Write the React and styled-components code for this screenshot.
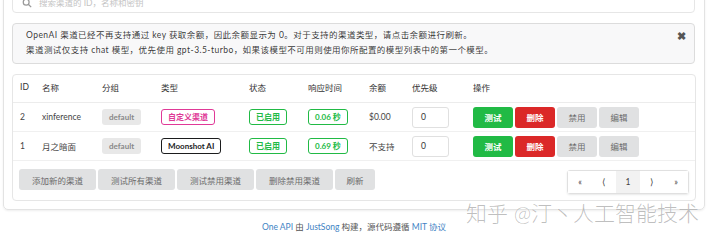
import React from 'react';
import styled, { createGlobalStyle } from 'styled-components';

const GlobalStyle = createGlobalStyle`
    * {
        box-sizing: border-box;
    }
    body {
        margin: 0;
        background: #fff;
        overflow: hidden;
        font-family: Lato, "Noto Sans CJK SC", sans-serif;
        color: rgba(0, 0, 0, 0.87);
    }
`;

const Page = styled.div`
    width: 705px;
    padding: 1px 0 0 3px;
    position: relative;
`;

const Card = styled.div`
    margin-top: -23px;
    padding: 9px 9px 8px 8px;
    border: 1px solid #e3e3e3;
    border-radius: 5px;
    box-shadow: 0 1px 2px rgba(34, 36, 38, 0.08);
`;

const Search = styled.div`
    height: 25px;
    border: 1px solid #e6e6e6;
    border-radius: 4px;
    display: flex;
    align-items: flex-end;
    gap: 7px;
    padding: 0 0 4px 9px;
    color: #c4c4c4;
    font-size: 8.5px;
`;

const Message = styled.div`
    margin-top: 10px;
    height: 41px;
    padding: 4px 13px;
    background: #f8f8f9;
    border: 1px solid #dcdcdc;
    border-radius: 4px;
    font-size: 8.5px;
    letter-spacing: 0.45px;
    line-height: 15px;
    color: rgba(0, 0, 0, 0.8);
    position: relative;
`;

const Close = styled.span`
    position: absolute;
    right: 8px;
    top: 4px;
    font-size: 11px;
    font-weight: 700;
    color: #555;
`;

const Table = styled.table`
    margin-top: 10px;
    width: 100%;
    table-layout: fixed;
    border-collapse: separate;
    border-spacing: 0;
    border: 1px solid #e6e6e6;
    border-radius: 4px;
    font-size: 8.5px;
`;

const Th = styled.th`
    height: 28px;
    padding: 0 0 3px 7px;
    text-align: left;
    font-weight: 400;
    color: #333;
    border-bottom: 1px solid #ececec;
`;

const Td = styled.td`
    height: 29px;
    padding: 0 0 0 7px;
    color: #444;
    border-bottom: 1px solid #f0f0f0;
    white-space: nowrap;
`;

const FootCell = styled.td`
    height: 38px;
    padding: 7px 6px 6px 6px;
    vertical-align: top;
`;

const FootRow = styled.div`
    display: flex;
    justify-content: space-between;
    align-items: flex-start;
`;

const Label = styled.span`
    display: inline-block;
    height: 16px;
    line-height: 14px;
    padding: 0 6px;
    border-radius: 3px;
    font-size: 8px;
    font-weight: 700;
    border: 1px solid ${p => p.$color || 'transparent'};
    color: ${p => p.$color || '#888'};
    background: ${p => (p.$color ? '#fff' : '#e8e8e8')};
`;

const Priority = styled.div`
    width: 37px;
    height: 21px;
    line-height: 19px;
    padding-left: 8px;
    border: 1px solid #e0e0e0;
    border-radius: 3px;
    color: #333;
`;

const Actions = styled.div`
    display: flex;
    gap: 2px;
`;

const Btn = styled.button`
    height: 21px;
    min-width: 40px;
    padding: 0 ${p => p.$pad || 0}px;
    border: none;
    border-radius: 3px;
    font-family: inherit;
    font-size: 8.5px;
    font-weight: ${p => (p.$bg ? 700 : 400)};
    background: ${p => p.$bg || '#e0e1e2'};
    color: ${p => (p.$bg ? '#fff' : '#6b6b6b')};
`;

const Toolbar = styled.div`
    display: flex;
    gap: 2px;
    margin-top: 1px;
`;

const Pager = styled.div`
    margin-top: 2px;
    display: flex;
    border: 1px solid #e0e0e0;
    border-radius: 3px;
    box-shadow: 0 1px 2px rgba(34, 36, 38, 0.1);
`;

const PageItem = styled.div`
    width: 24px;
    height: 22px;
    display: flex;
    align-items: center;
    justify-content: center;
    font-size: 8.5px;
    color: #444;
    background: ${p => (p.$active ? '#f2f2f2' : '#fff')};
`;

const Footer = styled.div`
    text-align: center;
    font-size: 8.5px;
    color: #555;
    padding-top: 10px;
`;

const A = styled.span`
    color: #4183c4;
`;

const Watermark = styled.div`
    position: absolute;
    left: 466px;
    top: 197px;
    font-size: 21px;
    font-weight: 300;
    color: rgba(0, 0, 0, 0.26);
    text-shadow: 0 0 1px #fff;
    white-space: nowrap;
`;

const SearchIcon = () => (
    <svg width="10" height="10" viewBox="0 0 24 24" fill="none" stroke="#999" strokeWidth="3">
        <circle cx="10" cy="10" r="7" />
        <line x1="15" y1="15" x2="22" y2="22" />
    </svg>
);

const cols = [22, 60, 59, 88, 59, 61, 43, 61, 229];
const green = '#21ba45';

const rows = [
    { id: 2, name: 'xinference', type: '自定义渠道', typeColor: '#e03997', time: '0.06 秒', balance: '$0.00' },
    { id: 1, name: '月之暗面', type: 'Moonshot AI', typeColor: '#1b1c1d', time: '0.69 秒', balance: '不支持' },
];

export default function App() {
    return (
        <Page>
            <GlobalStyle />
            <Card>
                <Search>
                    <SearchIcon />
                    <span>搜索渠道的 ID，名称和密钥</span>
                </Search>
                <Message>
                    <Close>✖</Close>
                    OpenAI 渠道已经不再支持通过 key 获取余额，因此余额显示为 0。对于支持的渠道类型，请点击余额进行刷新。
                    <br />
                    渠道测试仅支持 chat 模型，优先使用 gpt-3.5-turbo，如果该模型不可用则使用你所配置的模型列表中的第一个模型。
                </Message>
                <Table>
                    <colgroup>
                        {cols.map((w, i) => <col key={i} style={{ width: w }} />)}
                    </colgroup>
                    <thead>
                        <tr>
                            {['ID', '名称', '分组', '类型', '状态', '响应时间', '余额', '优先级', '操作'].map(h => (
                                <Th key={h}>{h}</Th>
                            ))}
                        </tr>
                    </thead>
                    <tbody>
                        {rows.map(r => (
                            <tr key={r.id}>
                                <Td>{r.id}</Td>
                                <Td>{r.name}</Td>
                                <Td><Label>default</Label></Td>
                                <Td><Label $color={r.typeColor}>{r.type}</Label></Td>
                                <Td><Label $color={green}>已启用</Label></Td>
                                <Td><Label $color={green}>{r.time}</Label></Td>
                                <Td>{r.balance}</Td>
                                <Td><Priority>0</Priority></Td>
                                <Td>
                                    <Actions>
                                        <Btn $bg={green}>测试</Btn>
                                        <Btn $bg="#db2828">删除</Btn>
                                        <Btn>禁用</Btn>
                                        <Btn>编辑</Btn>
                                    </Actions>
                                </Td>
                            </tr>
                        ))}
                        <tr>
                            <FootCell colSpan={9}>
                                <FootRow>
                                    <Toolbar>
                                        <Btn $pad={13}>添加新的渠道</Btn>
                                        <Btn $pad={13}>测试所有渠道</Btn>
                                        <Btn $pad={13}>测试禁用渠道</Btn>
                                        <Btn $pad={13}>删除禁用渠道</Btn>
                                        <Btn $pad={9}>刷新</Btn>
                                    </Toolbar>
                                    <Pager>
                                        <PageItem>«</PageItem>
                                        <PageItem>⟨</PageItem>
                                        <PageItem $active>1</PageItem>
                                        <PageItem>⟩</PageItem>
                                        <PageItem>»</PageItem>
                                    </Pager>
                                </FootRow>
                            </FootCell>
                        </tr>
                    </tbody>
                </Table>
            </Card>
            <Footer>
                <A>One API</A> 由 <A>JustSong</A> 构建，源代码遵循 <A>MIT 协议</A>
            </Footer>
            <Watermark>知乎 @汀丶人工智能技术</Watermark>
        </Page>
    );
}
